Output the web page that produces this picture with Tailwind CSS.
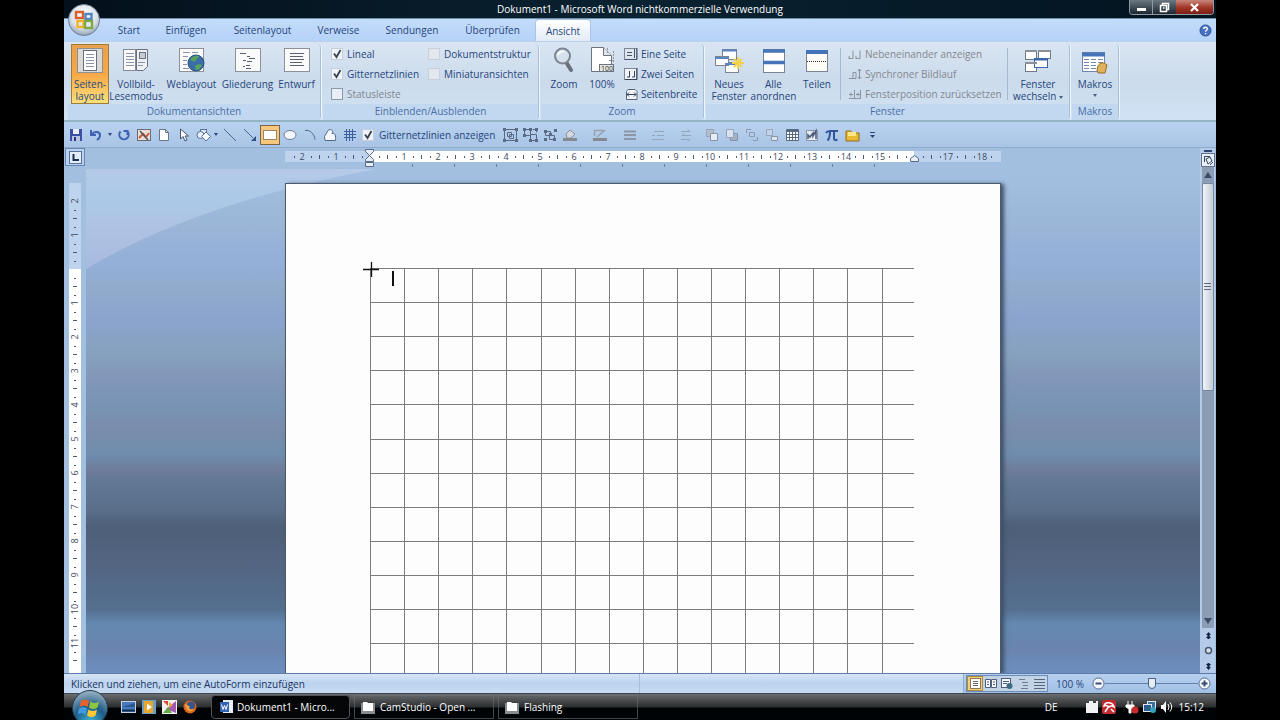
<!DOCTYPE html>
<html lang="de">

<head>
    <meta charset="UTF-8" />
    <meta name="viewport" content="width=device-width, initial-scale=1.0" />
    <title>Dokument1 - Microsoft Word</title>
    <script src="https://cdn.jsdelivr.net/npm/@tailwindcss/browser@4"></script>
</head>

<body class="bg-black px-16 h-screen overflow-hidden flex flex-col font-['Open_Sans','Noto_Sans',sans-serif] text-[10px] leading-[12px] text-[#27457c]">

    <!-- Title bar -->
    <header class="relative h-[19px] shrink-0 flex items-center justify-center bg-linear-to-r from-[#04101b] via-[#0a2231] to-[#03131f] border-b border-[#6f8fa8] text-white">
        <h1>Dokument1 - Microsoft Word nichtkommerzielle Verwendung</h1>
        <div class="absolute right-0.5 top-0 h-[15px] flex rounded-b border border-t-0 border-[#8d99a3] overflow-hidden">
            <button aria-label="Minimieren" class="w-[23px] bg-linear-to-b from-[#6d7982] to-[#1c2932] flex justify-center items-center border-r border-[#8d99a3]"><svg width="11" height="11"><rect x="1" y="6" width="9" height="3" fill="#fff" /></svg></button>
            <button aria-label="Wiederherstellen" class="w-[23px] bg-linear-to-b from-[#6d7982] to-[#1c2932] flex justify-center items-center"><svg width="11" height="11" fill="none" stroke="#fff" stroke-width="1.5"><path d="M3.500 3V1.500h6v6H8M1.500 3.500h6v6h-6zM4 6h1.500" /></svg></button>
            <button aria-label="Schließen" class="w-[37px] bg-linear-to-b from-[#c9877d] via-[#a53a2b] to-[#7a1d12] flex justify-center items-center"><svg width="11" height="11" stroke="#fff" stroke-width="2.2"><path d="M2 2l7 7M9 2l-7 7" /></svg></button>
        </div>
        <button aria-label="Office" class="absolute left-1 top-1 z-10 size-8">
            <svg viewBox="0 0 32 32">
                <defs>
                    <radialGradient id="orb" cx=".5" cy=".35" r=".65"><stop offset="0" stop-color="#fff" /><stop offset=".65" stop-color="#dbe2ea" /><stop offset="1" stop-color="#8fa0b3" /></radialGradient>
                </defs>
                <circle cx="16" cy="16" r="15.500" fill="url(#orb)" stroke="#71839a" />
                <g fill="none" stroke-width="2.400">
                    <rect x="8" y="8" width="7" height="6" stroke="#d9602b" />
                    <rect x="17.500" y="10" width="6" height="5" stroke="#4f86c4" />
                    <rect x="9.500" y="17" width="6" height="6" stroke="#f0b32c" />
                    <rect x="17" y="17" width="7" height="7" stroke="#7da845" />
                </g>
            </svg>
        </button>
    </header>

    <!-- Tabs -->
    <nav class="h-[22px] shrink-0 flex items-stretch pl-10 pr-1 bg-linear-to-b from-[#c3dcfb] to-[#b5d2f8]">
        <a href="#" class="w-[50px] flex items-center justify-center">Start</a>
        <a href="#" class="w-[64px] flex items-center justify-center">Einfügen</a>
        <a href="#" class="w-[89px] flex items-center justify-center">Seitenlayout</a>
        <a href="#" class="w-[63px] flex items-center justify-center">Verweise</a>
        <a href="#" class="w-[84px] flex items-center justify-center">Sendungen</a>
        <a href="#" class="w-[77px] flex items-center justify-center">Überprüfen</a>
        <a href="#" class="ml-1 w-[56px] flex items-center justify-center rounded-t-sm border border-b-0 border-[#a9c4e4] bg-linear-to-b from-white to-[#e2ebf6]">Ansicht</a>
        <button aria-label="Hilfe" class="ml-auto"><svg width="13" height="13"><circle cx="6.500" cy="6.500" r="5.500" fill="#4572c4" stroke="#2c4f94" /><path d="M4.700 5c0-2.500 3.800-2.300 3.600 0c-.1 1.300-1.700 1.200-1.700 2.700M6.600 9v1.300" stroke="#fff" stroke-width="1.400" fill="none" /></svg></button>
    </nav>

    <!-- Ribbon -->
    <section class="h-[81px] shrink-0 flex gap-0.5 px-1 pt-0.5 bg-linear-to-b from-[#d9e5f2] via-[#cbdbec] to-[#cfe2f3] border-t border-b-2 border-t-[#b9d0ea] border-b-[#92b4c4]">

        <div class="w-[253px] flex flex-col border-r border-[#a8c0da] rounded-sm shadow-[1px_0_#eef5fc]">
            <div class="h-[60px] flex pl-[3px]">
                <button class="w-[38px] flex flex-col items-center pt-[3px] gap-1 border border-[#a07c3c] bg-linear-to-b from-[#e9a14d] via-[#f5a845] to-[#fde07a]">
                    <svg class="shrink-0" width="26" height="26"><rect x=".5" y=".5" width="25" height="24" fill="#d9d9d6" stroke="#8c8f95" /><rect x="6.500" y="2.500" width="13" height="20" fill="#fff" stroke="#666f80" /><path d="M9 6.500h8M9 9.500h8M9 12.500h8M9 15.500h8M9 18.500h8" stroke="#8994a8" /></svg>
                    <span>Seiten-<br>layout</span>
                </button>
                <button class="w-[54px] flex flex-col items-center pt-1 gap-1">
                    <svg class="shrink-0" width="28" height="26"><rect x="1.500" y="1.500" width="12" height="21" fill="#fafafa" stroke="#848b98" /><path d="M14.500 1.500h11v17l-4 4h-7z" fill="#eef0f4" stroke="#6b7280" /><path d="M4 5.500h8M4 8.500h8M4 11.500h8M4 14.500h8M4 17.500h8M16 14.500h7M16 17.500h5" stroke="#8c95a6" /><rect x="17.500" y="4.500" width="6" height="6" fill="#c5ccd6" stroke="#6b7280" /></svg>
                    <span>Vollbild-<br>Lesemodus</span>
                </button>
                <button class="w-[57px] flex flex-col items-center pt-1 gap-1">
                    <svg class="shrink-0" width="28" height="26"><rect x="1.500" y=".5" width="24" height="23" fill="#fafafa" stroke="#8c929c" /><path d="M5 4.500h7M14 4.500h6M5 8.500h5M5 12.500h4M5 16.500h4M5 20.500h6" stroke="#8994a8" /><circle cx="18" cy="15" r="8" fill="#3a6ea8" stroke="#29507e" /><path d="M12 12c2-4 6-5 9-4c-1 3-3 2-3 5c-2 1-3 0-6-1zM17 18c3-2 6-2 7-1c-1 3-4 5-6 5z" fill="#5aa45a" /></svg>
                    <span>Weblayout</span>
                </button>
                <button class="w-[55px] flex flex-col items-center pt-1 gap-1">
                    <svg class="shrink-0" width="28" height="26"><rect x="1.500" y=".5" width="25" height="23" fill="#fafafa" stroke="#8c929c" /><path d="M6 5.500h6M13 8.500h3M15 10.500h6M13 13.500h5M9 12.500h3M12 17.500h4M9 18.500h2M12 20.500h5" stroke="#59606e" /></svg>
                    <span>Gliederung</span>
                </button>
                <button class="w-[43px] flex flex-col items-center pt-1 gap-1">
                    <svg class="shrink-0" width="28" height="26"><rect x="1.500" y=".5" width="25" height="23" fill="#fafafa" stroke="#8c929c" /><path d="M7 5.500h14M7 8.500h13M7 11.500h14M7 14.500h12M7 17.500h14" stroke="#59606e" /></svg>
                    <span>Entwurf</span>
                </button>
            </div>
            <div class="h-4 text-center pt-px bg-[#c1d8f0] text-[#4a6ea5]">Dokumentansichten</div>
        </div>

        <div class="w-[216px] flex flex-col border-r border-[#a8c0da] rounded-sm shadow-[1px_0_#eef5fc]">
            <div class="h-[60px] flex pl-2">
                <div class="w-[97px]">
                    <label class="h-5 flex items-center gap-1"><span class="relative"><input type="checkbox" checked class="peer block appearance-none size-3 bg-[#f0f4f8] border border-[#c5d0dc]"><svg class="absolute inset-0 hidden peer-checked:block pointer-events-none" width="12" height="12"><path d="M3 5.500l2.500 3.500l4-7" fill="none" stroke="#3b424e" stroke-width="1.800" /></svg></span>Lineal</label>
                    <label class="h-5 flex items-center gap-1"><span class="relative"><input type="checkbox" checked class="peer block appearance-none size-3 bg-[#f0f4f8] border border-[#c5d0dc]"><svg class="absolute inset-0 hidden peer-checked:block pointer-events-none" width="12" height="12"><path d="M3 5.500l2.500 3.500l4-7" fill="none" stroke="#3b424e" stroke-width="1.800" /></svg></span>Gitternetzlinien</label>
                    <label class="h-5 flex items-center gap-1 text-[#83858c]"><input type="checkbox" class="appearance-none size-3 bg-[#e9eef4] border border-[#8b98a8]">Statusleiste</label>
                </div>
                <div>
                    <label class="h-5 flex items-center gap-1"><input type="checkbox" class="appearance-none size-3 bg-[#e3e8ec] border border-[#c5d0dc]">Dokumentstruktur</label>
                    <label class="h-5 flex items-center gap-1"><input type="checkbox" class="appearance-none size-3 bg-[#e3e8ec] border border-[#c5d0dc]">Miniaturansichten</label>
                </div>
            </div>
            <div class="h-4 text-center pt-px bg-[#c1d8f0] text-[#4a6ea5]">Einblenden/Ausblenden</div>
        </div>

        <div class="w-[163px] flex flex-col border-r border-[#a8c0da] rounded-sm shadow-[1px_0_#eef5fc]">
            <div class="h-[60px] flex pl-1">
                <button class="w-[38px] flex flex-col items-center pt-[3px] gap-[5px]">
                    <svg class="shrink-0" width="24" height="26"><path d="M14 15l5 8" stroke="#68707c" stroke-width="4" stroke-linecap="round" /><circle cx="10.500" cy="9" r="7.500" fill="#d5e2ee" stroke="#7c8591" stroke-width="2" /><path d="M6 8c1-3 4-4 6-3" stroke="#fff" stroke-width="1.500" fill="none" /></svg>
                    <span>Zoom</span>
                </button>
                <button class="w-[38px] flex flex-col items-center pt-[3px] gap-[5px]">
                    <svg class="shrink-0" width="26" height="26"><path d="M2.500.5h12l8 8v16h-20z" fill="#fff" stroke="#6d7480" /><path d="M14.500.5v8h8" fill="#e1e5ea" stroke="#6d7480" /><path d="M18.500 1v6M24.500 4v12M20 13.500h5" stroke="#8d949e" stroke-dasharray="2 1" /><rect x="10.500" y="17.500" width="14" height="7" fill="#e6e6e2" stroke="#6d7480" /><text x="12" y="24" class="text-[7px]" fill="#333">100</text></svg>
                    <span>100%</span>
                </button>
                <div class="pl-[3px] whitespace-nowrap">
                    <button class="h-5 flex items-center gap-[3px]"><svg width="14" height="14"><rect x=".5" y="1.500" width="12" height="11" fill="#dfe5ec" stroke="#7a8595" /><path d="M3 5.500h5M3 8.500h5M1 12.500h12V1M10.500 2v9" stroke="#48546a" fill="none" /></svg>Eine Seite</button>
                    <button class="h-5 flex items-center gap-[3px]"><svg width="14" height="14"><rect x=".5" y="1.500" width="12" height="11" fill="#f2f5f8" stroke="#7a8595" /><path d="M5.500 4v6H3M10.500 4v6H8M1 12.500h12V1" stroke="#35425a" fill="none" /></svg>Zwei Seiten</button>
                    <button class="h-5 flex items-center gap-[3px]"><svg width="14" height="14"><path d="M4 2.500h7l2 2v8H2.500v-8z" fill="#f2f5f8" stroke="#59657a" /><path d="M3 7.500h9M5 5.500l-2 2l2 2M10 5.500l2 2l-2 2" stroke="#35425a" fill="none" /></svg>Seitenbreite</button>
                </div>
            </div>
            <div class="h-4 text-center pt-px bg-[#c1d8f0] text-[#4a6ea5]">Zoom</div>
        </div>

        <div class="w-[364px] flex flex-col border-r border-[#a8c0da] rounded-sm shadow-[1px_0_#eef5fc]">
            <div class="h-[60px] flex pl-[3px]">
                <button class="w-[40px] flex flex-col items-center pt-1 gap-1">
                    <svg class="shrink-0" width="30" height="26"><g fill="#fff" stroke="#7c8492"><rect x="8.500" y="1.500" width="14" height="10" /><rect x="11.500" y="14.500" width="13" height="10" /><rect x="1.500" y="8.500" width="13" height="9" /></g><path d="M8 2.500h15M11 16h14M1 10h14" stroke="#5b84c2" stroke-width="2" /><path d="M24 9v12M18 15h12M20 11l8 8M28 11l-8 8" stroke="#f2d24a" stroke-width="1.800" /></svg>
                    <span>Neues<br>Fenster</span>
                </button>
                <button class="w-[49px] flex flex-col items-center pt-1 gap-1">
                    <svg class="shrink-0" width="22" height="26"><rect x=".5" y="1.500" width="21" height="23" fill="#fff" stroke="#7c8492" /><path d="M0 3h22M0 14.500h22" stroke="#4674b8" stroke-width="3.500" /></svg>
                    <span>Alle<br>anordnen</span>
                </button>
                <button class="w-[38px] flex flex-col items-center pt-1 gap-1">
                    <svg class="shrink-0" width="24" height="26"><rect x="1.500" y="3.500" width="21" height="20" fill="#fdfdf6" stroke="#7c8492" /><path d="M1 4h22" stroke="#4674b8" stroke-width="4" /><path d="M2 13.500h20" stroke="#333" stroke-dasharray="1 1" /></svg>
                    <span>Teilen</span>
                </button>
                <div class="ml-1 my-1 border-l border-[#a5b9d0]"></div>
                <div class="pl-[7px] w-[166px] whitespace-nowrap text-[#85878e]">
                    <button class="h-5 flex items-center gap-[3px]"><svg width="14" height="12" fill="none" stroke="#8b929d"><path d="M1 10.500h4v-8M8 10.500h4v-8M1 8v3M8 8v3" /></svg>Nebeneinander anzeigen</button>
                    <button class="h-5 flex items-center gap-[3px]"><svg width="14" height="12" fill="none" stroke="#8b929d"><path d="M1 10.500h7v-6h-3v6M11.500 1v10M10 3l1.500-2l1.500 2M10 9l1.500 2l1.500-2" /></svg>Synchroner Bildlauf</button>
                    <button class="h-5 flex items-center gap-[3px]"><svg width="14" height="12" fill="none" stroke="#8b929d"><path d="M1 10.500h12M6.500 2v9M12.500 2v9M1 6.500h4M8 6.500h4M3 4.500v4M10 4.500v4" /></svg>Fensterposition zurücksetzen</button>
                </div>
                <div class="my-1 border-l border-[#a5b9d0]"></div>
                <button class="w-[60px] flex flex-col items-center pt-1 gap-1">
                    <svg class="shrink-0" width="28" height="26"><g fill="#fff" stroke="#6f7785"><rect x="1.500" y="2.500" width="11" height="9" /><rect x="14.500" y="2.500" width="12" height="8" /><rect x="1.500" y="14.500" width="11" height="9" /><rect x="10.500" y="10.500" width="13" height="9" stroke="#3a66ac" /></g><path d="M1 3h12M14 3h13M1 15h12" stroke="#8a8f98" stroke-width="2" /><path d="M10 11.500h14" stroke="#3a66ac" stroke-width="2" /></svg>
                    <span>Fenster<br>wechseln <span class="inline-block border-x-2 border-t-3 border-x-transparent border-t-[#4a5f85] align-middle"></span></span>
                </button>
            </div>
            <div class="h-4 text-center pt-px bg-[#c1d8f0] text-[#4a6ea5]">Fenster</div>
        </div>

        <div class="w-[47px] flex flex-col border-r border-[#a8c0da] rounded-sm shadow-[1px_0_#eef5fc]">
            <button class="h-[60px] flex flex-col items-center pt-1 gap-1">
                <svg class="shrink-0" width="28" height="26"><rect x="1.500" y="4.500" width="22" height="19" fill="#fff" stroke="#6f87ae" /><path d="M1 6.500h23" stroke="#4674b8" stroke-width="4" /><path d="M3 11.500h5M10 11.500h5M17 11.500h5M3 14.500h5M10 14.500h5M17 14.500h5M3 17.500h5M10 17.500h5M3 20.500h5M10 20.500h5" stroke="#7487a8" /><path d="M17 18c2-4 6-4 9-1l-2 8h-7l-1-3z" fill="#e0b15c" stroke="#9a6d22" /></svg>
                <span>Makros</span>
                <span class="border-x-2 border-t-3 border-x-transparent border-t-[#4a5f85]"></span>
            </button>
            <div class="h-4 text-center pt-px bg-[#c1d8f0] text-[#4a6ea5]">Makros</div>
        </div>
    </section>

    <!-- Quick access toolbar -->
    <div class="h-[26px] shrink-0 flex items-center bg-linear-to-b from-[#b9d2ee] to-[#a9c4e6] border-b border-[#8fabcc] [&>button]:w-5 [&>button]:h-5 [&>button]:flex [&>button]:items-center [&>button]:justify-center">
        <button aria-label="Speichern" class="ml-0.5"><svg width="14" height="14"><path d="M1 1h12v12H1z" fill="#3c4fa8" /><path d="M4 1h6v5H4z" fill="#e9edf6" /><path d="M3 8h8v5H3z" fill="#b9c4de" /><path d="M5 9h2v4H5z" fill="#26357e" /></svg></button>
        <button aria-label="Rückgängig"><svg width="14" height="14"><path d="M2 2v5h5M2.500 6.500c3-4 9-3 8.500 1.500c-.3 2-1.500 3-3 4" fill="none" stroke="#3f62b5" stroke-width="2" /></svg></button>
        <span class="mx-0.5 border-x-2 border-t-3 border-x-transparent border-t-[#2c4677]"></span>
        <button aria-label="Wiederholen"><svg width="14" height="14"><path d="M3.500 3.500a4.700 4.700 0 1 0 7 0M10.500 7V3h-4" fill="none" stroke="#3f62b5" stroke-width="2" /></svg></button>
        <button aria-label="Grafik"><svg width="14" height="14"><rect x=".5" y="1.500" width="13" height="11" fill="#e8dfd6" stroke="#6d6a78" /><path d="M2 10l4-4l3 3l3-4" stroke="#c95a3a" stroke-width="2" fill="none" /><path d="M3 3l8 9" stroke="#55535f" stroke-width="1.500" /></svg></button>
        <button aria-label="Neu"><svg width="12" height="14"><path d="M1.500 1.500h6l3 3v8h-9z" fill="#fff" stroke="#6a7588" /><path d="M7.500 1.500v3h3" fill="none" stroke="#6a7588" /></svg></button>
        <button aria-label="Auswählen"><svg width="12" height="14"><path d="M2.500 1v10l2.500-2.500l2 4.500l2-1l-2-4h3.500z" fill="#fff" stroke="#48566e" /></svg></button>
        <button aria-label="Formen"><svg width="16" height="14"><rect x="4.500" y="1.500" width="6" height="6" fill="#dfe8f3" stroke="#55729c" /><circle cx="4.500" cy="7" r="3.500" fill="#e8eef6" stroke="#55729c" /><path d="M10 4l4.500 4.500l-4.500 4.500l-4.500-4.500z" fill="#f4f7fb" stroke="#55729c" /></svg></button>
        <span class="mr-0.5 border-x-2 border-t-3 border-x-transparent border-t-[#2c4677]"></span>
        <button aria-label="Linie"><svg width="14" height="14"><path d="M1 1l12 12" stroke="#4a6793" /></svg></button>
        <button aria-label="Pfeil"><svg width="14" height="14"><path d="M1 1l9 9" stroke="#4a6793" /><path d="M13 13V8l-5 5z" fill="#31507f" /></svg></button>
        <button aria-label="Rechteck" class="border border-[#7b6548] bg-[#f9c77b]"><svg width="14" height="10"><rect x=".5" y=".5" width="13" height="9" fill="#fff" stroke="#9a8768" /></svg></button>
        <button aria-label="Ellipse"><svg width="14" height="12"><ellipse cx="7" cy="6" rx="6" ry="4.500" fill="#f3f6fa" stroke="#6b7c95" /></svg></button>
        <button aria-label="Bogen"><svg width="14" height="14"><path d="M2 2.500c5-1 9 3 10 9" stroke="#4a6793" fill="none" /></svg></button>
        <button aria-label="Freihandform"><svg width="14" height="14"><path d="M5 2.500c2-2 6-.5 4 3c3-1 4 2 3.500 7H2l-.5-4z" fill="#f3f6fa" stroke="#566a88" /></svg></button>
        <button aria-label="Raster"><svg width="14" height="14"><path d="M3.500 1v12M6.500 1v12M9.500 1v12M1 3.500h12M1 6.500h12M1 9.500h12" stroke="#3d5f9b" /></svg></button>
        <label class="ml-0.5 w-[138px] flex items-center gap-[5px] whitespace-nowrap"><span class="relative"><input type="checkbox" checked class="peer block appearance-none size-3 bg-[#edf3f9] border border-[#c5d0dc]"><svg class="absolute inset-0 hidden peer-checked:block pointer-events-none" width="12" height="12"><path d="M3 5.500l2.500 3.500l4-7" fill="none" stroke="#3b424e" stroke-width="1.800" /></svg></span>Gitternetzlinien anzeigen</label>
        <button aria-label="Gruppieren"><svg width="15" height="14"><path d="M1.500 1.500h12v11h-12zM4.500 4.500h4v4h-4zM6.500 6.500h4v4h-4z" fill="none" stroke="#5a6b86" /><path d="M0 0h3v3H0zM12 0h3v3h-3zM0 11h3v3H0zM12 11h3v3h-3z" fill="#5a6b86" /></svg></button>
        <button aria-label="Gruppierung aufheben"><svg width="15" height="14"><path d="M1.500 1.500h6v6h-6zM7.500 6.500h6v6h-6zM9.500 1.500h4v3" fill="none" stroke="#5a6b86" /><path d="M0 0h3v3H0zM6 0h3v3H6zM12 0h3v3h-3zM0 6h3v3H0zM6 11h3v3H6zM12 11h3v3h-3z" fill="#5a6b86" /></svg></button>
        <button aria-label="Neu gruppieren"><svg width="15" height="14"><path d="M2.500 3.500h5v4h-5zM6.500 7.500h5v4h-5z" fill="none" stroke="#5a6b86" /><path d="M1 2h3v3H1zM11 1h3v3h-3zM1 10h3v3H1zM10 10h3v3h-3zM6 5h3v3H6z" fill="#5a6b86" /></svg></button>
        <button aria-label="Fülleffekt"><svg width="14" height="14"><path d="M3 6l4-4l5 4l-4 4H4z" fill="#d3d9e0" stroke="#8b929c" /><path d="M0 10h14v3H0z" fill="#858a92" /></svg></button>
        <button aria-label="Linienfarbe" class="ml-2.5"><svg width="14" height="14"><path d="M1.500 8V2.500h9M4 9l8-7" fill="none" stroke="#99a1ac" stroke-width="1.500" /><path d="M0 10h14v3H0z" fill="#858a92" /></svg></button>
        <button aria-label="Linienart" class="ml-2.5"><svg width="14" height="14"><path d="M1 3.500h12M1 7h12M1 11h12" stroke="#8b97a9" stroke-width="1.800" /></svg></button>
        <button aria-label="Strichart" class="ml-2"><svg width="14" height="14"><path d="M3 3.500h10M1 7.500h3M6 7.500h7M1 11.500h12" stroke="#94a5be" /></svg></button>
        <button aria-label="Pfeilart" class="ml-2"><svg width="14" height="14"><path d="M2 3.500h9l-2-2M12 7.500H3l2-2M2 11.500h9l-2 2" fill="none" stroke="#94a5be" /></svg></button>
        <button aria-label="Vordergrund" class="ml-1.5"><svg width="14" height="14"><path d="M1.500 1.500h7v7h-7z" fill="#b3bfce" stroke="#98a5b8" /><path d="M5.500 5.500h7v7h-7z" fill="#e8edf3" stroke="#8794a8" /></svg></button>
        <button aria-label="Hintergrund"><svg width="14" height="14"><path d="M5.500 5.500h7v7h-7z" fill="#a5b1c2" stroke="#8794a8" /><path d="M1.500 1.500h7v8h-7z" fill="#d8e2ee" stroke="#98a5b8" /></svg></button>
        <button aria-label="Nach vorne"><svg width="14" height="14"><path d="M1.500 5V1.500H6M4.500 4.500h5v4h-5zM12.500 9v3.500H8" fill="none" stroke="#8b9ab0" /></svg></button>
        <button aria-label="Nach hinten"><svg width="14" height="14"><path d="M1.500 1.500h6v6h-6z" fill="#c2d3e8" stroke="#98a5b8" /><path d="M6.500 8.500h6v4h-6z" fill="#dfe6ef" stroke="#8794a8" /></svg></button>
        <button aria-label="Tabelle"><svg width="15" height="14"><path d="M1.500 1.500h12v11h-12z" fill="#fff" stroke="#566a88" /><path d="M1 3h13" stroke="#566a88" stroke-width="2" /><path d="M1 6.500h13M1 9.500h13M4.500 2v11M7.500 2v11M10.500 2v11" stroke="#566a88" /></svg></button>
        <button aria-label="Diagramm"><svg width="14" height="14"><path d="M1.500 2.500h11v10h-11z" fill="#e4eaf1" stroke="#8893a5" /><path d="M3 11V7l2 2l3-4v3l3-5v8" stroke="#4c5c78" stroke-width="1.500" fill="none" /></svg></button>
        <button aria-label="Formel"><svg width="14" height="14"><path d="M1 5c1-2 2-2 4-2h8M5 3.500c0 4-.5 7-2.500 9M9 3.500v7c0 2 2 2 3.500 1" stroke="#31549b" stroke-width="2" fill="none" /></svg></button>
        <button aria-label="Öffnen"><svg width="15" height="14"><path d="M1 3h5l1 2h7v8H1z" fill="#e8bb33" stroke="#8f6f1c" /><path d="M3 4h8v4H3z" fill="#fbe68a" /></svg></button>
        <button aria-label="Anpassen"><svg width="7" height="8"><path d="M1 1h5v1H1zM1 4h5L3.500 7z" fill="#2c4677" /></svg></button>
    </div>

    <!-- Rulers, page and scroll bar -->
    <main class="flex-1 min-h-0 flex overflow-hidden pr-px bg-[#a3bfdf]">
        <div class="w-[22px] shrink-0 flex flex-col items-center">
            <button aria-label="Tabstopp" class="h-[18px] w-[20px] flex items-center justify-center border border-[#6886b2] bg-[#b9d0ee]"><svg width="13" height="13"><rect x=".5" y=".5" width="12" height="12" fill="#e3edf9" stroke="#55719c" /><path d="M4.500 3v6H10" stroke="#1b2e55" stroke-width="2" fill="none" /></svg></button>
            <svg id="vruler" class="mt-[17px] flex-1 w-3 overflow-visible"></svg>
        </div>
        <div class="flex-1 min-w-0 flex flex-col">
            <div class="h-[21px] shrink-0 flex justify-center">
                <svg id="hruler" class="w-[716px] h-[21px]"></svg>
            </div>
            <div class="relative flex-1 min-h-0 overflow-hidden flex justify-center pt-[14px] bg-[linear-gradient(#a3c0e2_0px,#9ab5d6_60px,#94afd9_95px,#90abcb_120px,#8ba4cf_150px,#86a1bd_185px,#8196ba_210px,#7793b4_240px,#7a8cab_260px,#6f8dae_285px,#6f7d9b_300px,#607894_315px,#5b6f8b_340px,#4d6078_358px,#526480_390px,#546f8f_440px,#6389b1_455px,#6a84ae_480px,#6c90c0_504px)]">
                <svg class="absolute left-0 top-0" width="300" height="102" viewBox="0 0 300 102">
                    <defs>
                        <linearGradient id="streak" x1="0" y1="0" x2="0" y2="1"><stop offset="0" stop-color="#b5cae8" /><stop offset=".3" stop-color="#abc9e8" /><stop offset=".6" stop-color="#afc2e3" /><stop offset="1" stop-color="#a8badf" /></linearGradient>
                    </defs>
                    <path d="M0 0H290Q110 34 0 100z" fill="url(#streak)" />
                </svg>
                <article class="relative w-[716px] bg-[#fdfdfe] border border-b-0 border-[#4c5a70] shadow-[3px_1px_4px_#3f5068]">
                    <svg id="grid" class="absolute left-[84px] top-[84px] w-[548px] h-full" fill="none" stroke="#7c7c80" shape-rendering="crispEdges"></svg>
                    <svg class="absolute left-[77px] top-[77px]" width="34" height="28" stroke="#111"><path d="M0 8.500h16M8.500 1v15" stroke-width="1.300" /><path d="M30 10v15" stroke-width="2" /></svg>
                </article>
            </div>
        </div>
        <div class="w-[15px] shrink-0 flex flex-col items-center border-l border-[#b5cbe8] bg-[#b3cbe9]">
            <div class="mt-0.5 h-0.5 w-2 bg-[#2d4570] shrink-0"></div>
            <button aria-label="Lineal" class="mt-px shrink-0 size-[14px] bg-[#e6edf5] border border-[#66748c]"><svg width="12" height="12" fill="none" stroke="#39465c"><path d="M2.500 8V2.500H8M4 5l4-2l2 4l-4 3zM8 11l3-3" /></svg></button>
            <button aria-label="Nach oben" class="shrink-0 h-[16px] w-3 bg-[#8c9db5] flex items-center justify-center"><svg width="8" height="6"><path d="M4 0l4 6H0z" fill="#3c4d6b" /></svg></button>
            <div class="flex-1 w-3 bg-[#8b9cb4]">
                <div class="h-[208px] border border-[#7c8aa0] rounded-xs bg-linear-to-r from-[#f2f5f8] to-[#c3ccd8] flex items-center justify-center"><svg width="8" height="8"><path d="M0 .5h7M0 3.500h7M0 6.500h7" stroke="#5c6a80" /></svg></div>
            </div>
            <button aria-label="Nach unten" class="shrink-0 h-[14px] w-3 bg-[#8b9cb4] flex items-center justify-center"><svg width="8" height="6"><path d="M4 6l4-6H0z" fill="#3c4d6b" /></svg></button>
            <button aria-label="Vorherige Seite" class="shrink-0 h-[15px]"><svg width="7" height="8"><path d="M3.500 0l2.500 3H4.500v1L6 6H4.500v1h-2V6H1l1.500-2V3H1z" fill="#16233f" /></svg></button>
            <button aria-label="Browseobjekt" class="shrink-0 h-[15px]"><svg width="9" height="9"><circle cx="4.500" cy="4.500" r="3" fill="#d7dde5" stroke="#4a566b" stroke-width="1.500" /></svg></button>
            <button aria-label="Nächste Seite" class="shrink-0 h-[15px]"><svg width="7" height="8"><path d="M3.500 8l2.500-3H4.500V4L6 2H4.500V1h-2v1H1l1.500 2v1H1z" fill="#16233f" /></svg></button>
        </div>
    </main>

    <!-- Status bar -->
    <footer class="h-5 shrink-0 flex items-center border-t border-[#5c7ba8] bg-linear-to-b from-[#d6e5f7] via-[#bcd3ee] to-[#c8ddf3]">
        <p class="pl-[7px] w-[575px] text-[#1d3461]">Klicken und ziehen, um eine AutoForm einzufügen</p>
        <div class="h-full border-l border-[#a4bedb]"></div>
        <div class="ml-auto h-full flex items-center pl-0.5 pr-[5px] border-l border-[#8fabcf] bg-linear-to-b from-[#b7d0ef] to-[#a2c0e6]">
            <div class="h-[17px] flex items-center border border-[#6d8cb8] bg-[#c2d3e6] [&>button]:w-[16px] [&>button]:h-[15px] [&>button]:flex [&>button]:items-center [&>button]:justify-center">
                <button aria-label="Seitenlayout" class="bg-[#f6cf7a] border border-[#a98a44]"><svg width="11" height="11"><rect x=".5" y=".5" width="10" height="10" fill="#fff" stroke="#8a7a52" /><path d="M3 3.500h5M3 5.500h5M3 7.500h5" stroke="#666" /></svg></button>
                <button aria-label="Lesemodus"><svg width="12" height="11"><path d="M.5 1.500h5v8h-5zM6.500 1.500h5v8h-5zM2 4h2M2 6.500h2M8 4h2M8 6.500h2" fill="#f5f7fa" stroke="#4e5f7c" /></svg></button>
                <button aria-label="Weblayout"><svg width="12" height="12"><rect x=".5" y=".5" width="9" height="9" fill="#f5f7fa" stroke="#4e5f7c" /><path d="M2 3.500h6M2 5.500h4" stroke="#4e5f7c" /><circle cx="8.500" cy="8" r="3" fill="#3f6a86" /></svg></button>
                <button aria-label="Gliederung"><svg width="11" height="11"><path d="M1 1.500h6M4 4.500h6M5 7.500h5M3 10.500h7" stroke="#6c7c96" /></svg></button>
                <button aria-label="Entwurf"><svg width="11" height="11"><path d="M0 1.500h11M0 4.500h11M0 7.500h11M0 10.500h11" stroke="#56657f" /></svg></button>
            </div>
            <button class="w-[44px] text-center whitespace-nowrap">100 %</button>
            <button aria-label="Verkleinern"><svg width="13" height="13"><circle cx="6.500" cy="6.500" r="5.500" fill="#f3f7fb" stroke="#55698c" /><path d="M3.500 6.500h6" stroke="#3a4d70" stroke-width="2" /></svg></button>
            <input type="range" aria-label="Zoom" class="w-[93px] h-3 appearance-none bg-[linear-gradient(#6080ad,#6080ad)] bg-[length:100%_1px] bg-center bg-no-repeat [&::-webkit-slider-thumb]:appearance-none [&::-webkit-slider-thumb]:w-2 [&::-webkit-slider-thumb]:h-[11px] [&::-webkit-slider-thumb]:rounded-b [&::-webkit-slider-thumb]:border [&::-webkit-slider-thumb]:border-[#4a5e80] [&::-webkit-slider-thumb]:bg-[#e4edf7]">
            <button aria-label="Vergrößern"><svg width="13" height="13"><circle cx="6.500" cy="6.500" r="5.500" fill="#f3f7fb" stroke="#55698c" /><path d="M3.500 6.500h6M6.500 3.500v6" stroke="#3a4d70" stroke-width="2" /></svg></button>
        </div>
    </footer>

    <!-- Taskbar -->
    <div class="relative h-[27px] shrink-0 flex items-center pl-[57px] pr-3 border-t border-[#3d4650] bg-linear-to-b from-[#6b6e70] from-0% via-[#2b2d2f] via-50% to-[#000305] to-55% text-white">
        <button aria-label="Start" class="absolute left-2 -top-1 h-[31px] w-9 overflow-hidden">
            <svg width="36" height="36" viewBox="0 0 36 36">
                <defs>
                    <radialGradient id="start" cx=".5" cy=".9" r=".9"><stop offset="0" stop-color="#3fb6d6" /><stop offset=".5" stop-color="#1d5a86" /><stop offset="1" stop-color="#9db4c4" /></radialGradient>
                </defs>
                <circle cx="18" cy="18" r="17.500" fill="url(#start)" stroke="#20384c" />
                <path d="M9 11q4-3 8 0l-1.500 6q-4-3-8 0z" fill="#e8632c" />
                <path d="M18.500 11.500q4 3 8.500 0l-1.500 6q-4 3-8.500 0z" fill="#8cc63e" />
                <path d="M7 18.500q4-3 8 0l-1.500 6q-4-3-8 0z" fill="#3f9be0" />
                <path d="M16.500 19.500q4 3 8.500 0l-1.500 6q-4 3-8.500 0z" fill="#fbc832" />
            </svg>
        </button>
        <div class="w-[90px] flex gap-1.5">
            <button aria-label="Desktop anzeigen"><svg width="15" height="14"><rect x=".5" y="1.500" width="14" height="11" fill="#4779bd" stroke="#c3d2e2" /><path d="M1 10.500h13" stroke="#122c4e" stroke-width="2" /><path d="M1 7L14 3v4z" fill="#2d568f" /></svg></button>
            <button aria-label="Media Player"><svg width="14" height="14"><rect width="14" height="14" fill="#6aa0c8" /><rect x="2" y="1" width="9" height="12" fill="#e9a62c" /><path d="M5 3.500v7l5-3.500z" fill="#fff" /></svg></button>
            <button aria-label="Bilder"><svg width="15" height="14"><rect width="15" height="14" fill="#f1f1ee" /><path d="M1 1h5v5z" fill="#d94b3a" /><path d="M14 1L4 9l10 4z" fill="#a25ab0" /><path d="M1 13l5-6l4 6z" fill="#62a844" /><path d="M7 2l4 3l-4 3z" fill="#eaa63a" /></svg></button>
            <button aria-label="Firefox"><svg width="14" height="14"><circle cx="7" cy="7" r="6.500" fill="#d8661f" /><circle cx="8" cy="5.500" r="4" fill="#35558f" /><path d="M2 4c2 0 2 2 5 2c-2 2 0 4 4 3c-3 4-8 3-9-5z" fill="#f0a23c" /></svg></button>
        </div>
        <button class="h-6 w-[139px] flex items-center gap-1 pl-2 rounded-sm border border-[#50555a] bg-[#050607]"><svg width="13" height="14"><rect x="3" width="10" height="13" fill="#e4ecf6" /><rect y="2" width="9" height="10" fill="#3565b2" /><path d="M1.500 4.500l1.500 5l1.500-4l1.500 4l1.500-5M10 3.500h2M10 6.500h2M10 9.500h2" stroke="#fff" fill="none" /></svg><span>Dokument1 - Micro...</span></button>
        <button class="ml-1 h-6 w-[140px] flex items-center gap-1 pl-1.5 border border-[#6d7275]/60"><svg width="15" height="14"><rect y="3" width="14" height="11" fill="#888d92" /><path d="M2 2h4l1 1h5v8H2z" fill="#fff" /></svg><span>CamStudio - Open ...</span></button>
        <button class="ml-1 h-6 w-[140px] flex items-center gap-1 pl-1.5 border border-[#6d7275]/60"><svg width="15" height="14"><rect y="3" width="14" height="11" fill="#888d92" /><path d="M2 2h4l1 1h5v8H2z" fill="#fff" /></svg><span>Flashing</span></button>
        <div class="ml-auto flex items-center gap-[3px]">
            <span class="mr-6">DE</span>
            <svg width="14" height="14"><path d="M1 3h3V1h4v2h3V1h2v12H1z" fill="#f2f2f2" /></svg>
            <svg width="14" height="14"><rect width="14" height="14" rx="2" fill="#c12a30" /><path d="M2 6c1-5 9-4 10 1c-3-2-4-1-5 0c-2-2-3-2-5-1zM7 6l-4 6M9 9l3 3" stroke="#fff" fill="none" stroke-width="1.500" /></svg>
            <svg class="ml-1.5" width="14" height="14"><path d="M3 1v4M7 1v4M1 5h8v2L6 9v4H4V9L1 7z" fill="#fff" stroke="#fff" /><circle cx="10" cy="10" r="3.500" fill="#c92b2b" /></svg>
            <svg width="15" height="14"><rect x="5.500" y="1.500" width="8" height="7" fill="#3c6f9e" stroke="#dfe8ef" /><rect x="1.500" y="4.500" width="8" height="7" fill="#2c5b8d" stroke="#dfe8ef" /><circle cx="11" cy="10" r="3" fill="#35a0b8" /></svg>
            <svg width="14" height="14"><path d="M1 5h2l3-4v12l-3-4H1z" fill="#fff" /><path d="M8 4q2 3 0 6M10 2.500q3.500 4.500 0 9" stroke="#fff" fill="none" /></svg>
            <span class="ml-0.5">15:12</span>
        </div>
    </div>

    <script>
        const RULER_CM = 34;
        const GRID_CM = 34.1;

        // a dot at each quarter, a longer bar at each half
        function tick(x, y, long, vertical) {
            const d = long ? 2 : 1;
            return vertical
                ? `<path d="M${y - d} ${x}.5h${d * 2}" stroke="#4c5a72"/>`
                : `<path d="M${x}.5 ${y - d}v${d * 2}" stroke="#4c5a72"/>`;
        }

        function horizontalRuler() {
            let out = '<rect y="3" width="716" height="11" fill="#bdd3ee"/><rect x="85" y="3" width="544" height="11" fill="#fff"/>';
            for (let q = -9; q <= 73; q++) {
                const x = Math.round(85 + q * RULER_CM / 4);
                if (q % 4 !== 0) out += tick(x, 9, q % 2 === 0, false);
                else if (q !== 0 && q !== 64) out += `<text x="${x}" y="12" text-anchor="middle" class="text-[9px]" fill="#3d4a63">${Math.abs(q / 4)}</text>`;
            }
            for (let i = 1; i < 13; i++) out += `<path d="M${85 + i * 42}.5 16v3" stroke="#6a7d9c"/>`;
            out += '<path d="M80.500 1.500h8v2l-4 4l-4-4zM80.500 13.500v-2l4-4l4 4v2zM80.500 14.500h8v4h-8z" fill="#e8eef6" stroke="#5a6b88"/>';
            out += '<path d="M625.500 13.500v-3l4-3l4 3v3z" fill="#e8eef6" stroke="#5a6b88"/>';
            document.getElementById("hruler").innerHTML = out;
        }

        function verticalRuler(svg, height) {
            let out = '<rect width="12" height="86" fill="#bdd3ee"/><rect y="86" width="12" height="100%" fill="#fff"/>';
            for (let q = -8; 86 + q * RULER_CM / 4 < height - 6; q++) {
                const y = Math.round(86 + q * RULER_CM / 4);
                if (q % 4 !== 0) out += tick(y, 6, q % 2 === 0, true);
                else if (q !== 0) out += `<text x="9" y="${y}" transform="rotate(-90 9 ${y})" text-anchor="middle" class="text-[9px]" fill="#3d4a63">${Math.abs(q / 4)}</text>`;
            }
            svg.innerHTML = out;
        }

        function gridLines() {
            let d = "";
            for (let i = 0; i < 16; i++) d += `M${Math.round(i * GRID_CM)}.5 0V2000`;
            for (let i = 0; i < 30; i++) d += `M0 ${Math.round(i * GRID_CM)}.5H544`;
            document.getElementById("grid").innerHTML = `<path d="${d}"/>`;
        }

        horizontalRuler();
        gridLines();

        // the vertical ruler is as long as the window lets it be
        new ResizeObserver(([entry]) => {
            verticalRuler(entry.target, entry.contentRect.height);
        }).observe(document.getElementById("vruler"));
    </script>
</body>

</html>
